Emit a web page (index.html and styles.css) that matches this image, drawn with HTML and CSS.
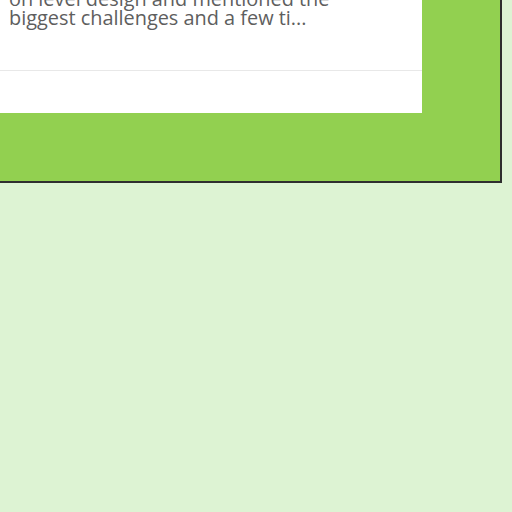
FILE: index.html
```html
<!DOCTYPE html>
<html>
<head>
<meta charset="utf-8">
<link rel="stylesheet" href="styles.css">
</head>
<body>
<div class="panel">
  <div class="card">
    <div class="card-body">
      <p class="excerpt">on level design and mentioned the biggest challenges and a few ti...</p>
    </div>
    <div class="card-footer"></div>
  </div>
</div>
</body>
</html>
```
FILE: styles.css
```css
html, body {
  margin: 0;
  padding: 0;
  background: #ddf3d3;
}
body {
  width: 512px;
  height: 512px;
  overflow: hidden;
  font-family: "Open Sans", "Liberation Sans", sans-serif;
}
.panel {
  width: 500px;
  background: #92d050;
  border-right: 2px solid #2e2e2e;
  border-bottom: 2px solid #2e2e2e;
  padding-bottom: 68px;
}
.card {
  width: 422px;
  background: #ffffff;
}
.card-body {
  height: 70px;
  padding: 0 0 0 9px;
  box-sizing: border-box;
}
.excerpt {
  margin: 0;
  position: relative;
  top: -11px;
  width: 350px;
  font-size: 19.9px;
  line-height: 19px;
  color: #5e5e5e;
}
.card-footer {
  height: 42px;
  border-top: 1px solid #e8e8e8;
}
```
